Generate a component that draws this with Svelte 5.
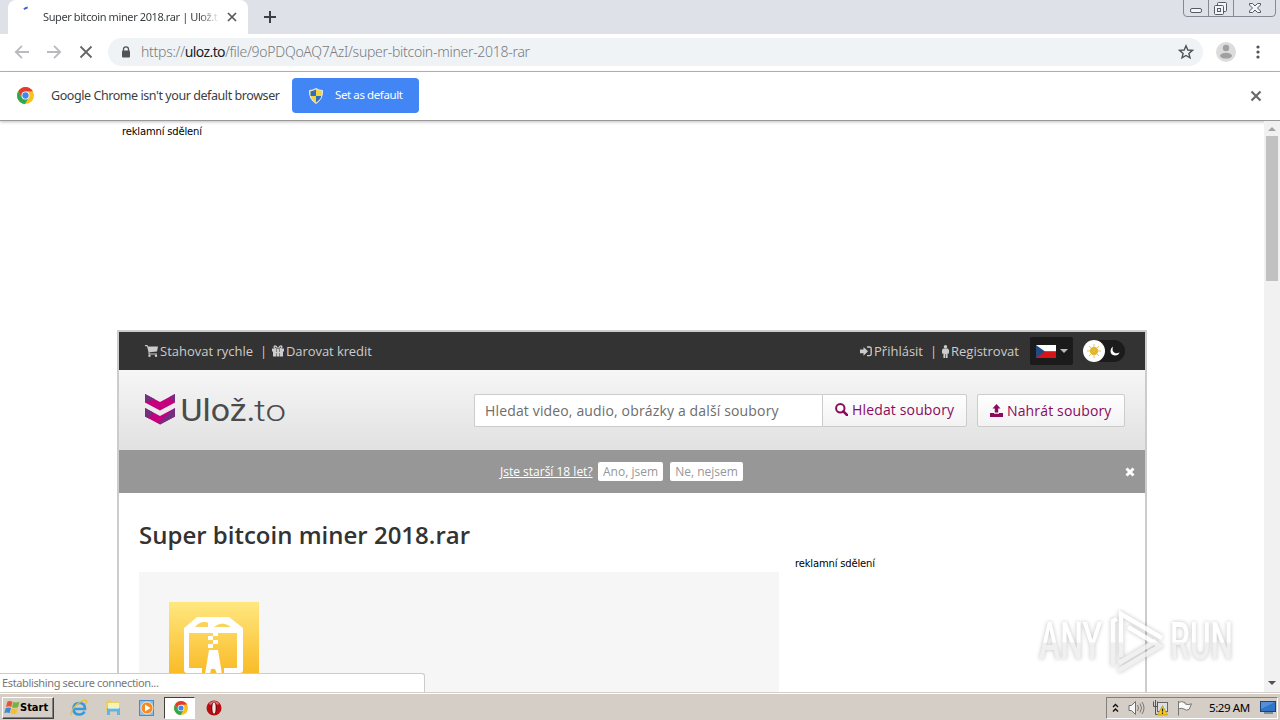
<script>
    let tabTitle = "Super bitcoin miner 2018.rar | Ulož.t"
    let host = "uloz.to"
    let path = "/file/9oPDQoAQ7AzI/super-bitcoin-miner-2018-rar"
    let fileName = "Super bitcoin miner 2018.rar"
    let search = ""
    let time = "5:29 AM"
    let adult = true

    function closeAdult() {
        adult = false
    }
</script>

{#snippet chrome(size)}
    <svg width={size} height={size} viewBox="0 0 20 20">
        <circle cx="10" cy="10" r="10" fill="#fbc116" />
        <path d="M1.4 5 A10 10 0 0 1 18.7 5 L10 5.4 L6 12.300 Z" fill="#e33b2e" />
        <path d="M1.4 5 L6 12.6 L10 14.5 L14 12.3 L9.4 20 A10 10 0 0 1 1.4 5Z" fill="#2da94f" />
        <circle cx="10" cy="10" r="4.7" fill="#fff" />
        <circle cx="10" cy="10" r="3.7" fill="#4285f4" />
    </svg>
{/snippet}

<div class="screen">
    <div class="tabs">
        <div class="tab">
            <svg class="spinner" width="10" height="10" viewBox="0 0 10 10"><path d="M2 4.300 Q3.500 2.700 5.700 2.500" fill="none" stroke="#3d64d0" stroke-width="2" /></svg>
            <span class="tab-title">{tabTitle}</span>
            <svg width="10" height="10" viewBox="0 0 10 10"><path d="M1 1 L9 9 M9 1 L1 9" stroke="#55585c" stroke-width="1.7" /></svg>
        </div>
        <svg class="plus" width="12" height="12" viewBox="0 0 12 12"><path d="M6 0 V12 M0 6 H12" stroke="#3c4043" stroke-width="2" /></svg>
        <div class="window-buttons">
            <svg width="94" height="17" viewBox="0 0 94 17">
                <path d="M.5 0 V13 Q.5 16.5 4 16.5 H89 Q92.500 16.5 92.500 13 V0 M25.500 0 V16 M50.500 0 V16" fill="none" stroke="#858995" />
                <g fill="#f4f5f8" stroke="#555b66">
                    <rect x="7.500" y="8.500" width="11" height="4" rx="1.500" />
                    <rect x="34.500" y="2.500" width="9" height="9" rx="1" />
                    <rect x="31.500" y="5.500" width="9" height="9" rx="1" />
                    <rect x="34.500" y="8.500" width="3" height="3" />
                    <path d="M66.500 3.500 h3 l2.500 2.500 l2.500 -2.500 h3 v1.500 l-3 3 l3 3 v1.500 h-3 l-2.500 -2.500 l-2.500 2.500 h-3 v-1.500 l3 -3 l-3 -3 z" />
                </g>
            </svg>
        </div>
    </div>

    <div class="toolbar">
        <svg width="16" height="16" viewBox="0 0 16 16" fill="none" stroke="#b8babd" stroke-width="1.800"><path d="M15 8 H2 M8 1.800 L1.800 8 L8 14.200" /></svg>
        <svg width="16" height="16" viewBox="0 0 16 16" fill="none" stroke="#b8babd" stroke-width="1.800"><path d="M1 8 H14 M8 1.800 L14.200 8 L8 14.200" /></svg>
        <svg width="16" height="16" viewBox="0 0 16 16" fill="none" stroke="#666" stroke-width="1.800"><path d="M2.500 2.500 L13.500 13.500 M13.500 2.500 L2.500 13.500" /></svg>
        <div class="omnibox">
            <svg width="10" height="12" viewBox="0 0 10 12"><path d="M2.500 5 V3.200 a2.500 2.400 0 0 1 5 0 V5" fill="none" stroke="#505357" stroke-width="1.300" /><rect x="1" y="4.500" width="8" height="7" rx="1" fill="#505357" /></svg>
            <span class="url">https://<b>{host}</b>{path}</span>
            <svg width="16" height="16" viewBox="0 0 16 16"><path d="M8 1.800 L9.800 6 L14.400 6.400 L10.900 9.400 L12 13.800 L8 11.500 L4 13.800 L5.100 9.400 L1.600 6.400 L6.200 6 Z" fill="none" stroke="#505357" stroke-width="1.400" /></svg>
        </div>
        <svg class="avatar" width="20" height="20" viewBox="0 0 20 20"><circle cx="10" cy="10" r="10" fill="#dcdcdc" /><circle cx="10" cy="6" r="3.200" fill="#a0a0a0" /><ellipse cx="10" cy="13.700" rx="6" ry="2.900" fill="#a0a0a0" /></svg>
        <svg class="menu" width="4" height="14" viewBox="0 0 4 14" fill="#505357"><circle cx="2" cy="2" r="1.600" /><circle cx="2" cy="7" r="1.600" /><circle cx="2" cy="12" r="1.600" /></svg>
    </div>

    <div class="infobar">
        {@render chrome(17)}
        <span class="info-text">Google Chrome isn't your default browser</span>
        <button class="default-button">
            <svg width="14" height="16" viewBox="0 0 14 16">
                <path d="M7 .5 Q10 2.500 13.500 2.500 Q14 11 7 15.500 Q0 11 .5 2.500 Q4 2.500 7 .5Z" fill="#f5d33f" stroke="#e8edf3" />
                <path d="M7 1.500 Q4.500 3.300 1.500 3.400 L1.600 8 H7Z M7 8 H12.300 Q11.300 12 7 14.400Z" fill="#2d6dc4" />
            </svg>
            <span>Set as default</span>
        </button>
        <svg class="info-close" width="12" height="12" viewBox="0 0 12 12"><path d="M1.500 1.500 L10.500 10.500 M10.500 1.500 L1.500 10.500" stroke="#66696d" stroke-width="2.200" /></svg>
    </div>

    <div class="viewport">
        <div class="page">
            <div class="ad-label">reklamní sdělení</div>
            <div class="site">
                <nav>
                    <svg width="13" height="12" viewBox="0 0 13 12" fill="#ccc"><path d="M0 0 H2.500 L3 1.500 H13 L12 6.500 L4.500 7.300 V8.500 H12 V9.500 H3.500 V7 L2 1.200 H0Z" /><circle cx="4.500" cy="10.800" r="1.200" /><circle cx="11" cy="10.800" r="1.200" /></svg>
                    <a class="fast" href="#fast">Stahovat rychle</a>
                    <span class="sep">|</span>
                    <svg width="12" height="12" viewBox="0 0 12 12" fill="#ccc"><path d="M0 3.500 H4.500 V7 H7.500 V3.500 H12 V6.500 H11 V11.500 H7.500 V8 H4.500 V11.500 H1 V6.500 H0Z" /><path d="M5.500 3.500 Q4.500 .8 3 .9 Q1.500 1.500 2.500 3 L4 3.600 M6.500 3.500 Q7.500 .8 9 .9 Q10.500 1.500 9.500 3 L8 3.600" fill="none" stroke="#ccc" stroke-width="1.300" /><path d="M5 4 H7 V11.500 H5Z" /></svg>
                    <a class="gift" href="#gift">Darovat kredit</a>
                    <svg class="login-icon" width="12" height="11" viewBox="0 0 12 11"><path d="M0 3.500 H3.500 V1 L8 5.300 L3.500 9.700 V7.200 H0Z" fill="#ccc" /><path d="M7 1 H9.500 Q11.200 1 11.200 2.500 V8 Q11.200 9.700 9.500 9.700 H7" fill="none" stroke="#ccc" stroke-width="1.300" /></svg>
                    <a class="login" href="#login">Přihlásit</a>
                    <span class="sep second">|</span>
                    <svg width="7" height="13" viewBox="0 0 7 13" fill="#ccc"><circle cx="3.500" cy="1.700" r="1.700" /><path d="M1.200 3.500 H5.800 L7 5 V8.500 H5.600 V13 H3.800 V9 H3.200 V13 H1.400 V8.500 H0 V5Z" /></svg>
                    <a class="register" href="#register">Registrovat</a>
                    <button class="language" title="Čeština">
                        <svg width="20" height="13" viewBox="0 0 20 13"><rect width="20" height="6.500" fill="#fff" /><rect y="6.500" width="20" height="6.500" fill="#d7141a" /><path d="M0 0 L9 6.500 L0 13Z" fill="#1f4b82" /></svg>
                        <i class="caret"></i>
                    </button>
                    <div class="theme">
                        <div class="sun">
                            <svg width="14" height="14" viewBox="0 0 14 14"><circle cx="7" cy="7" r="4" fill="#e0b11c" /><path d="M7 0 V14 M0 7 H14 M2 2 L12 12 M12 2 L2 12" stroke="#e3bd45" stroke-width=".9" /></svg>
                        </div>
                        <svg width="10" height="10" viewBox="0 0 10 10"><path d="M3 .5 Q1.500 5.500 5 7 Q7.500 8 9.500 6.300 Q8.500 9.500 5 9.500 Q.5 9 .5 5 Q.5 2 3 .5Z" fill="#fff" /></svg>
                    </div>
                </nav>

                <header>
                    <svg class="logo" width="144" height="46" viewBox="0 -6 144 46">
                        <path d="M1 2 L16 10 L31 2 V10.500 L16 18.500 L1 10.500Z" fill="#c4007f" />
                        <path d="M1 16 L16 24 L31 16 V24.500 L16 32.500 L1 24.500Z" fill="#c4007f" />
                        <path d="M1 2 L11 7.300 L1 10.500Z M31 2 V10.500 L25 5.200Z M1 16 L9 20.300 L5 26.600 L1 24.500Z M31 16 V24.500 L16 32.500 V30Z" fill="#71317f" />
                        <text x="36.500" y="29" font-family="Roboto, sans-serif" font-size="31" textLength="75" lengthAdjust="spacingAndGlyphs" fill="#4b4b4b">Ulož.</text>
                        <text x="110" y="29" font-family="Roboto, sans-serif" font-size="30" font-weight="300" textLength="32" lengthAdjust="spacingAndGlyphs" fill="#4b4b4b">to</text>
                    </svg>
                    <div class="search">
                        <input bind:value={search} placeholder="Hledat video, audio, obrázky a další soubory" />
                        <button class="search-button">
                            <svg width="13" height="13" viewBox="0 0 13 13"><circle cx="5.300" cy="5.300" r="4.200" fill="none" stroke="#8a0a5c" stroke-width="2" /><path d="M8.300 8.300 L12 12" stroke="#8a0a5c" stroke-width="2.500" stroke-linecap="round" /></svg>
                            <span>Hledat soubory</span>
                        </button>
                    </div>
                    <button class="upload">
                        <svg width="13" height="13" viewBox="0 0 13 13" fill="#8a0a5c"><path d="M6.500 0 L10.500 4.500 H8.200 V8.500 H4.800 V4.500 H2.500Z" /><path d="M0 9 H4 V9.800 H9 V9 H13 V13 H0Z" /></svg>
                        <span>Nahrát soubory</span>
                    </button>
                </header>

                {#if adult}
                    <div class="adult">
                        <a href="#adult">Jste starší 18 let?</a>
                        <button class="yes">Ano, jsem</button>
                        <button class="no">Ne, nejsem</button>
                        <button class="adult-close" onclick={closeAdult} aria-label="Zavřít">
                            <svg width="10" height="10" viewBox="0 0 10 10"><path d="M1.500 1.500 L8.500 8.500 M8.500 1.500 L1.500 8.500" stroke="#fff" stroke-width="2.900" /></svg>
                        </button>
                    </div>
                {/if}

                <main>
                    <div class="file">
                        <h1>{fileName}</h1>
                        <div class="preview">
                            <svg width="90" height="90" viewBox="0 0 90 90">
                                <defs><linearGradient id="gold" x1="0" y1="0" x2="0" y2="1"><stop offset="0" stop-color="#ffe780" /><stop offset=".8" stop-color="#f9bb26" /><stop offset="1" stop-color="#f8b31b" /></linearGradient></defs>
                                <rect width="90" height="90" fill="url(#gold)" />
                                <path fill-rule="evenodd" d="M28 15 H60 L74 26 V68 Q74 71 71 71 H55 V66 H68 V31 H20 V66 H33 V71 H18 Q15 71 15 68 V26Z" fill="#fff" />
                                <path d="M26 25 Q32 18 40 21 L43 25Z M45 25 Q53 18 62 25Z" fill="#f9d45c" />
                                <path d="M39 21 h5 v4 h-5z M44 26 h5 v4 h-5z" fill="#fff" />
                                <path d="M44 31 h5 v3 h-5z M39 34 h5 v4 h-5z M44 38 h5 v4 h-5z M39 42 h5 v4 h-5z M40 48 H49 L53 72 H48 L46 67 H42 L41 72 H36Z" fill="#fff" />
                            </svg>
                        </div>
                    </div>
                    <aside>reklamní sdělení</aside>
                </main>
            </div>
        </div>
        <div class="scrollbar">
            <i class="up"></i>
            <div class="thumb"></div>
            <i class="down"></i>
        </div>
        <div class="status">Establishing secure connection...</div>
        <svg class="watermark" width="210" height="76" viewBox="0 0 210 76">
            <defs>
                <linearGradient id="fade" x1="0" y1="8" x2="0" y2="68" gradientUnits="userSpaceOnUse"><stop offset=".52" stop-color="#fff" /><stop offset=".53" stop-color="#ededed" /></linearGradient>
            </defs>
            <g fill="url(#fade)" font-family="Roboto, sans-serif" font-size="52" font-weight="500">
                <text x="9" y="56" textLength="63" lengthAdjust="spacingAndGlyphs">ANY</text>
                <text x="140" y="56" textLength="63" lengthAdjust="spacingAndGlyphs">RUN</text>
            </g>
            <path d="M91 54 V11 L132 35 M98 24 L130 43 L88 68 M89 60 L126 38 M83 63 V18 L87 16" fill="none" stroke="url(#fade)" stroke-width="4.500" />
        </svg>
    </div>

    <div class="taskbar">
        <button class="start">
            <svg width="16" height="15" viewBox="0 0 16 15"><path d="M3.500 1.500 Q5.500 .3 8.500 1.700 L7.200 7 Q4.500 5.700 2 7Z" fill="#e8542d" /><path d="M9.300 2 Q12 3 15.500 1.700 L14 7.200 Q10.500 8.400 8 7.200Z" fill="#73b343" /><path d="M1.700 8 Q4.500 6.800 7 8 L5.600 13.200 Q3 12 .3 13.200Z" fill="#4288cd" /><path d="M7.800 8.300 Q10.500 9.300 13.700 8.200 L12.300 13.500 Q9 14.700 6.400 13.500Z" fill="#f4c12a" /></svg>
            <span>Start</span>
        </button>
        <div class="quick">
            <svg width="18" height="18" viewBox="0 0 18 18"><path d="M4.500 10 H15 Q15 4 9.500 4 Q3.500 4 3.500 10 Q3.500 15.500 9.500 15.500 Q13 15.500 14.500 12.500" fill="none" stroke="#369bdc" stroke-width="2.700" /><path d="M2 16 Q-1 15 4 8.500 Q10 1.500 16 1.200 Q18 2.300 15 5.500" fill="none" stroke="#e9bd3d" stroke-width="1.200" /></svg>
            <svg width="18" height="18" viewBox="0 0 18 18"><path d="M2 3 Q2 1.500 4 1.500 H7 L8 3 H15 V12 H2Z" fill="#e6ce69" /><rect x="4" y="4" width="11" height="7" fill="#faf0b2" /><path d="M3 9 H16 V16 H13 V12.500 H6 V16 H3Z" fill="#63b5da" /><path d="M4 9.500 H15" stroke="#b2e3f4" /></svg>
            <svg width="18" height="18" viewBox="0 0 18 18"><rect x="1.500" y="1.500" width="14" height="15" fill="#8fbfe8" stroke="#4a8ac3" /><circle cx="9" cy="9" r="6" fill="#f58b20" stroke="#fff" stroke-width=".7" /><path d="M7 5.500 L12.500 9 L7 12.500Z" fill="#fff" /></svg>
        </div>
        <div class="active-task">{@render chrome(14)}</div>
        <svg class="opera" width="16" height="16" viewBox="0 0 16 16"><circle cx="8" cy="8" r="7.500" fill="#b90d12" /><path d="M3 3 Q8 -1 13 3 L12 5 Q8 2 4 5Z" fill="#dc6b6d" /><ellipse cx="8" cy="8" rx="2.800" ry="6" fill="#5d0709" /><ellipse cx="8" cy="8" rx="1.700" ry="5.500" fill="#f3e6e4" /></svg>
        <div class="tray">
            <svg width="7" height="10" viewBox="0 0 7 10"><path d="M1 4 L3.500 1.500 L6 4 M1 8.500 L3.500 6 L6 8.500" fill="none" stroke="#111" stroke-width="1.400" /></svg>
            <svg class="sound" width="17" height="16" viewBox="0 0 17 16"><path d="M1 5.500 H3.500 L7.500 1.500 V14.500 L3.500 10.500 H1Z" fill="#f7f7f7" stroke="#6e6e6e" /><path d="M9.500 5 Q11.500 8 9.500 11 M12 3.500 Q15 8 12 12.500 M14 2 Q18 8 14 14" fill="none" stroke="#777" /></svg>
            <svg class="network" width="17" height="16" viewBox="0 0 17 16"><rect x="5.500" y="2.500" width="10" height="9" fill="#d8e0e8" stroke="#666" /><path d="M1.500 1.500 V6.500 H5.500 V1.500 M3.500 0 V14.500 H7" fill="none" stroke="#555" /><path d="M10.500 5.500 L15.500 15 H5.500Z" fill="#f6ca1b" stroke="#be9414" stroke-width=".7" /><path d="M10.500 8.500 V11.500 M10.500 12.500 V14" stroke="#222" stroke-width="1.200" /></svg>
            <svg class="flag" width="17" height="16" viewBox="0 0 17 16"><path d="M2.500 1 V15.500 M2.500 2.500 Q5 .8 9 2.500 V3.800 Q12 5.500 15.500 3.800 L13 9.500 Q10 11 8 9 Q5 7.500 2.500 9Z" fill="#fafafa" stroke="#777" /></svg>
            <span class="clock">{time}</span>
            <svg class="desktop" width="16" height="13" viewBox="0 0 16 13"><rect x=".5" y=".5" width="15" height="10" fill="#2f76c7" stroke="#184477" /><path d="M1 1 H15 L1 8Z" fill="#568fd9" /><path d="M4 12 H13" stroke="#244e7a" /></svg>
        </div>
    </div>
</div>

<style>
    :global(body) {
        overflow: hidden;
        background: #fff;
    }

    .screen {
        display: flex;
        flex-direction: column;
        width: 1280px;
        height: 720px;
        font-family: "Noto Sans", sans-serif;
        font-size: 12px;
        color: #3c4043;
        white-space: nowrap;
    }

    svg {
        display: block;
        flex-shrink: 0;
    }

    button {
        font-family: inherit;
        box-sizing: border-box;
        border: 0;
        padding: 0;
        display: flex;
        align-items: center;
        flex-shrink: 0;
    }

    .tabs {
        display: flex;
        align-items: flex-start;
        height: 34px;
        background: #dee1e8;
        padding-left: 8px;
    }

    .tab {
        box-sizing: border-box;
        display: flex;
        align-items: center;
        width: 240px;
        height: 34px;
        padding-left: 14px;
        background: #fff;
        border-radius: 8px 8px 0 0;
    }

    .spinner {
        margin-top: -14px;
        width: 10px;
        height: 10px;
    }

    .tab-title {
        width: 176px;
        margin: -2px 8px 0 11px;
        font-size: 11px;
        letter-spacing: -0.4px;
        mask-image: linear-gradient(to right, #000 156px, transparent 177px);
    }

    .plus {
        margin: 11px 0 0 16px;
    }

    .window-buttons {
        margin-left: auto;
        margin-right: 3px;
    }

    .toolbar {
        box-sizing: border-box;
        display: flex;
        align-items: center;
        height: 38px;
        padding: 0 20px 1px 14px;
        border-bottom: 1px solid #b6b6b6;
        gap: 16px;
    }

    .omnibox {
        box-sizing: border-box;
        display: flex;
        align-items: center;
        width: 1095px;
        height: 28px;
        margin-left: -2px;
        padding: 0 9px 0 13px;
        background: #f0f3f6;
        border-radius: 14px;
        flex-shrink: 0;
    }

    .url {
        flex: 1;
        margin-left: 10px;
        margin-top: -1px;
        font-size: 14px;
        font-weight: 300;
        letter-spacing: -0.28px;
        color: #777b80;
    }

    .url b {
        font-weight: 400;
        letter-spacing: -0.6px;
        color: #202124;
    }

    .avatar {
        margin-left: -3px;
    }

    .menu {
        margin-left: 4px;
    }

    .infobar {
        box-sizing: border-box;
        display: flex;
        align-items: center;
        height: 49px;
        padding: 0 18px 1px 17px;
        border-bottom: 1px solid #999;
        box-shadow: 0 1px 3px rgba(0, 0, 0, 0.25);
        position: relative;
    }

    .info-text {
        width: 241px;
        margin-left: 17px;
        font-size: 12.5px;
        letter-spacing: -0.43px;
    }

    .default-button {
        width: 127px;
        height: 35px;
        padding-left: 17px;
        gap: 12px;
        color: #fff;
        background: #4285f4;
        border-radius: 4px;
        font-size: 11.5px;
        letter-spacing: -0.4px;
    }

    .default-button span {
        margin-top: -2px;
    }

    .info-close {
        margin-left: auto;
    }

    .viewport {
        display: flex;
        height: 571px;
        overflow: hidden;
        position: relative;
    }

    .page {
        width: 1264px;
        height: 571px;
        overflow: hidden;
        font-family: "Open Sans", sans-serif;
    }

    .ad-label, aside {
        font-family: "DejaVu Sans", sans-serif;
        font-size: 10px;
        line-height: 12px;
        letter-spacing: -0.17px;
        color: #000;
    }

    .ad-label {
        height: 204px;
        padding: 5px 0 0 122px;
    }

    .site {
        width: 1026px;
        height: 600px;
        margin-left: 117px;
        border: 2px solid #ccc;
    }

    nav {
        box-sizing: border-box;
        display: flex;
        align-items: center;
        height: 38px;
        padding: 0 20px 0 26px;
        background: #333;
        font-size: 13px;
        color: #ccc;
    }

    nav a {
        color: #ccc;
        text-decoration: none;
        margin-left: 2px;
    }

    .fast {
        width: 93px;
    }

    .gift {
        width: 90px;
        letter-spacing: -0.08px;
    }

    .sep {
        width: 4px;
        margin: 0 8px 0 7px;
    }

    .login-icon {
        margin-left: auto;
    }

    .login {
        width: 49px;
    }

    .register {
        width: 69px;
    }

    .language {
        width: 43px;
        height: 28px;
        margin: 0 10px;
        padding-left: 6px;
        gap: 4px;
        background: #1b1b1b;
        border-radius: 2px;
    }

    .caret {
        border: 4px solid transparent;
        border-top-color: #bbb;
        border-bottom: 0;
    }

    .theme {
        display: flex;
        align-items: center;
        gap: 5px;
        width: 42px;
        height: 22px;
        background: #1b1b1b;
        border-radius: 11px;
    }

    .sun {
        display: flex;
        align-items: center;
        justify-content: center;
        width: 22px;
        height: 22px;
        background: #fff;
        border-radius: 50%;
    }

    header {
        box-sizing: border-box;
        display: flex;
        align-items: center;
        height: 80px;
        padding: 0 20px 0 25px;
        background: linear-gradient(#f6f6f6, #e1e1e1);
    }

    .logo {
        margin-top: -3px;
    }

    .search {
        display: flex;
        width: 493px;
        margin-left: auto;
        margin-right: 10px;
    }

    input {
        box-sizing: border-box;
        width: 348px;
        height: 33px;
        padding: 0 10px;
        border: 1px solid #ccc;
        border-right: 0;
        border-radius: 2px 0 0 2px;
        background: #fff;
        font-family: inherit;
        font-size: 14px;
        letter-spacing: 0.15px;
    }

    input::placeholder {
        color: #6d6d6d;
    }

    .search-button, .upload {
        height: 33px;
        padding-left: 12px;
        gap: 4px;
        border: 1px solid #ccc;
        border-radius: 0 2px 2px 0;
        background: linear-gradient(#fff, #f2f2f2);
        color: #8a0a5c;
        font-size: 14px;
        letter-spacing: 0.15px;
    }

    .search-button {
        width: 145px;
        padding-bottom: 2px;
    }

    .upload {
        width: 148px;
        border-radius: 2px;
    }

    .adult {
        display: flex;
        align-items: center;
        height: 43px;
        padding-left: 381px;
        background: #979797;
        font-size: 12px;
    }

    .adult a {
        width: 94px;
        color: #fff;
        margin-right: 4px;
    }

    .yes, .no {
        width: 65px;
        height: 19px;
        justify-content: center;
        margin-right: 7px;
        border-radius: 2px;
        background: #fff;
        color: #979797;
        font-size: 12px;
    }

    .no {
        width: 73px;
    }

    .adult-close {
        margin-left: auto;
        margin-right: 10px;
        background: none;
    }

    main {
        display: flex;
        padding: 24px 0 0 20px;
    }

    .file {
        width: 640px;
    }

    h1 {
        margin: 0 0 20px;
        font-size: 24px;
        font-weight: 600;
        line-height: 35px;
        color: #333;
    }

    .preview {
        height: 200px;
        padding: 30px;
        background: #f6f6f6;
    }

    aside {
        margin: 41px 0 0 16px;
    }

    .scrollbar {
        display: flex;
        flex-direction: column;
        align-items: center;
        width: 16px;
        background: #f1f1f1;
    }

    .up {
        margin: 6px 0 5px;
        border: 4px solid transparent;
        border-top: 0;
        border-bottom-color: #a3a3a3;
    }

    .thumb {
        width: 12px;
        height: 145px;
        background: #c1c1c1;
    }

    .down {
        margin: auto 0 7px;
        border: 4px solid transparent;
        border-bottom: 0;
        border-top-color: #505050;
    }

    .status {
        box-sizing: border-box;
        position: absolute;
        left: -1px;
        bottom: 0;
        width: 426px;
        height: 19px;
        padding-left: 2px;
        border: 1px solid #ccc;
        border-bottom: 0;
        border-radius: 0 3px 0 0;
        background: #fff;
        font-size: 11px;
        line-height: 18px;
        letter-spacing: -0.36px;
        color: #777;
    }

    .watermark {
        position: absolute;
        left: 1030px;
        top: 482px;
        filter: drop-shadow(0 0 2px rgba(0, 0, 0, 0.3));
        opacity: 0.8;
    }

    .taskbar {
        box-sizing: border-box;
        display: flex;
        align-items: center;
        height: 28px;
        padding: 2px 2px 0;
        background: #d5cec6;
        border-top: 1px solid #d5cec6;
        box-shadow: inset 0 1px #fff;
        color: #000;
    }

    .start {
        width: 52px;
        height: 22px;
        padding-left: 1px;
        gap: 0;
        border: 1px solid;
        border-color: #fff #404040 #404040 #fff;
        box-shadow: inset -1px -1px #808080;
        background: #d5cec6;
        color: #000;
        font-family: "DejaVu Sans Condensed", "DejaVu Sans", sans-serif;
        font-size: 11px;
        font-weight: bold;
    }

    .quick {
        display: flex;
        gap: 16px;
        width: 94px;
        margin-left: 16px;
    }

    .active-task {
        box-sizing: border-box;
        display: flex;
        align-items: center;
        justify-content: center;
        width: 31px;
        height: 22px;
        padding-left: 2px;
        border: 1px solid;
        border-color: #404040 #fff #fff #404040;
        background: #fff;
    }

    .opera {
        margin-left: 11px;
    }

    .tray {
        box-sizing: border-box;
        display: flex;
        align-items: center;
        width: 172px;
        height: 22px;
        margin-left: auto;
        padding-left: 5px;
        border: 1px solid;
        border-color: #808080 #fff #fff #808080;
    }

    .sound {
        margin-left: 9px;
    }

    .network, .flag {
        margin-left: 7px;
    }

    .clock {
        width: 43px;
        margin-left: 16px;
        margin-top: -1px;
        font-size: 11.5px;
        letter-spacing: -0.4px;
    }

    .desktop {
        margin-left: 8px;
    }
</style>
